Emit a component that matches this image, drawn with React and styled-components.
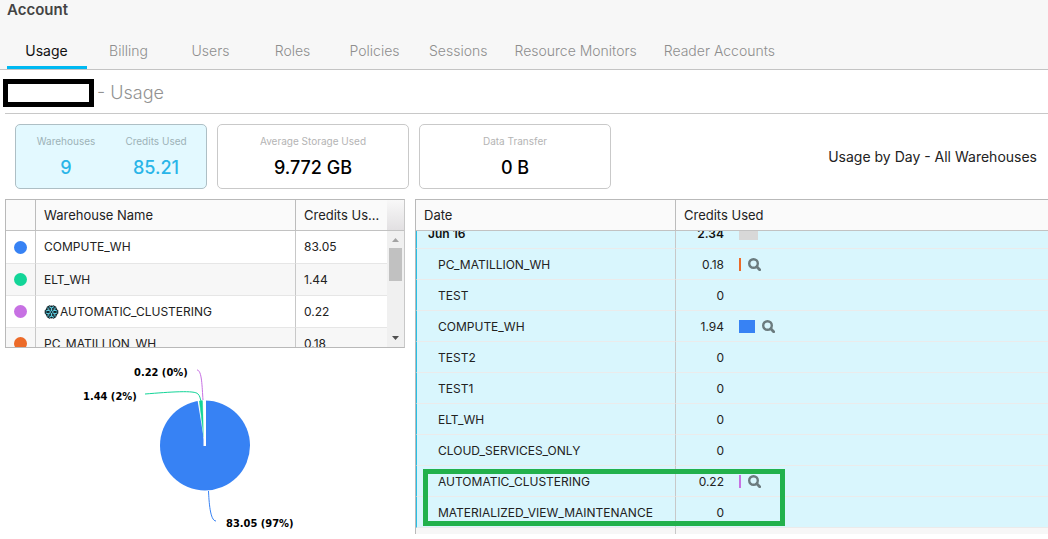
import React, { useLayoutEffect, useRef } from "react";
import styled, { createGlobalStyle } from "styled-components";

const GlobalStyle = createGlobalStyle`
  *, *::before, *::after { box-sizing: border-box; }
  body {
    margin: 0;
    background: #fff;
    color: #222;
    font-family: Inter, "Liberation Sans", sans-serif;
    font-size: 12px;
    line-height: 16px;
  }
`;

const Page = styled.div`
  overflow: hidden;
`;

const Header = styled.header`
  display: flex;
  flex-direction: column;
  gap: 15px;
  background: #f7f7f7;
  border-bottom: 1px solid #c4c4c4;
`;

const AccountTitle = styled.h1`
  margin: 0;
  padding: 0 7px;
  font-size: 15px;
  font-weight: 600;
  line-height: 20px;
  color: #444;
`;

const Tabs = styled.nav`
  display: flex;
  gap: 2px;
  padding: 0 7px;
`;

const Tab = styled.a`
  display: flex;
  justify-content: center;
  align-items: center;
  min-width: 80px;
  height: 34px;
  padding: 0 13px 0 12px;
  border-bottom: 3px solid ${(p) => (p.$active ? "#00b9f2" : "transparent")};
  color: ${(p) => (p.$active ? "#111" : "#8e8e8e")};
  font-size: 14px;
  font-weight: ${(p) => (p.$active ? 400 : 300)};
  text-decoration: none;
  white-space: nowrap;
`;

const SectionTitle = styled.h2`
  display: flex;
  align-items: center;
  gap: 3px;
  height: 44px;
  margin: 0 0 0 5px;
  padding-top: 3px;
  border-bottom: 1px solid #c8c8c8;
  color: #929292;
  font-size: 18px;
  font-weight: 300;
`;

const RedactedName = styled.span`
  width: 91px;
  height: 28px;
  margin-left: -2px;
  border: 5px solid #000;
  background: #fff;
`;

const Summary = styled.section`
  display: flex;
  align-items: center;
  justify-content: space-between;
  padding: 10px 11px 10px 15px;
`;

const Cards = styled.div`
  display: flex;
  gap: 10px;
`;

const Card = styled.button`
  display: flex;
  justify-content: center;
  width: 192px;
  height: 65px;
  padding: 8px 5px;
  border: 1px solid ${(p) => (p.$active ? "#aebfc5" : "#c9c9c9")};
  border-radius: 5px;
  background: ${(p) => (p.$active ? "#e3f9ff" : "#fff")};
  color: ${(p) => (p.$active ? "#29b5e8" : "#000")};
  font: inherit;
`;

const Metric = styled.span`
  display: flex;
  flex: 1;
  flex-direction: column;
  gap: 9px;
`;

const MetricLabel = styled.span`
  color: ${(p) => (p.$active ? "#9db2b7" : "#b4b4b4")};
  font-size: 10px;
  white-space: nowrap;
`;

const MetricValue = styled.span`
  font-size: 18px;
  font-weight: 500;
  line-height: 20px;
`;

const ChartTitle = styled.h3`
  margin: 0;
  color: #222;
  font-size: 14px;
  font-weight: 400;
`;

const Panels = styled.main`
  display: grid;
  grid-template-columns: 400px minmax(0, 1fr);
  gap: 10px;
  padding-left: 5px;
`;

const WarehousePanel = styled.section`
  display: flex;
  border: 1px solid #b9b9b9;
  border-right-color: #c8c8c8;
`;

const Viewport = styled.div`
  flex: 1;
  height: ${(p) => p.$height}px;
  overflow: hidden;
`;

const Grid = styled.table`
  width: 100%;
  border-spacing: 0;
  table-layout: fixed;
`;

const Heading = styled.th`
  position: sticky;
  top: 0;
  width: ${(p) => p.$width || "auto"};
  height: 31px;
  padding: 0 4px 0 8px;
  overflow: hidden;
  border-right: ${(p) => (p.$last ? "0" : "1px")} solid #bcbcbc;
  border-bottom: 1px solid #c2c2c2;
  background: #fafafa;
  color: #222;
  font-size: 13px;
  font-weight: 400;
  text-align: left;
  text-overflow: ellipsis;
  white-space: nowrap;
`;

const Cell = styled.td`
  height: 32px;
  padding: 0 8px;
  border-right: ${(p) => (p.$last ? "0" : "1px")} solid #c8c8c8;
  border-bottom: 1px solid #e6e6e6;
  white-space: nowrap;
`;

const WarehouseRow = styled.tr`
  background: ${(p) => (p.$shaded ? "#f7f7f7" : "#fff")};

  &:first-child td {
    height: 33px;
  }
`;

const WarehouseName = styled.span`
  display: flex;
  align-items: center;
  gap: 1px;
`;

const Dot = styled.span`
  display: block;
  width: 13px;
  height: 13px;
  border-radius: 50%;
  background: ${(p) => p.$color};
`;

const ScrollTrack = styled.div`
  display: flex;
  flex-direction: column;
  align-items: center;
  width: 17px;
  background: #f0f0f0;
`;

const ScrollCorner = styled.div`
  width: 100%;
  height: 31px;
  border-bottom: 1px solid #c2c2c2;
  background: linear-gradient(#f8f8f8, #e2e0e2);
`;

const ScrollThumb = styled.div`
  width: 13px;
  height: 33px;
  margin-bottom: auto;
  background: #c1c1c1;
`;

const ScrollArrow = styled.svg`
  width: 17px;
  height: 17px;
  fill: ${(p) => p.$color};
`;

const PieChart = styled.svg`
  display: block;
  width: 400px;
  height: 186px;
  font-family: "DejaVu Sans Condensed", "DejaVu Sans", sans-serif;
  font-size: 11px;
  font-weight: 700;
`;

const UsagePanel = styled.section`
  display: flex;
  align-self: start;
  border-top: 1px solid #b9b9b9;
  border-left: 1px solid #b9b9b9;
`;

const UsageRow = styled.tr`
  background: ${(p) => (p.$plain ? "#f7f7f7" : "#d9f6fd")};
  font-weight: ${(p) => (p.$total ? 600 : 400)};
  color: ${(p) => (p.$total ? "#111" : "#222")};
`;

const DateCell = styled.td`
  height: 31px;
  padding: 2px 8px 0 ${(p) => (p.$total ? 11 : 21)}px;
  border-left: 1px solid ${(p) => (p.$plain ? "#f7f7f7" : "#29bfe5")};
  border-right: 1px solid #c8c8c8;
  border-bottom: 1px solid #ebebeb;
  white-space: nowrap;
`;

const CreditsCell = styled.td`
  height: 31px;
  padding: 0;
  border-bottom: 1px solid #ebebeb;
`;

const Credits = styled.div`
  display: flex;
  align-items: center;
`;

const CreditValue = styled.span`
  width: 48px;
  margin-right: 15px;
  padding-top: 2px;
  text-align: right;
`;

const Bar = styled.span`
  height: 13px;
  background: ${(p) => p.$color};
`;

const DetailButton = styled.button`
  display: flex;
  margin-left: 7px;
  padding: 0;
  border: 0;
  background: none;
  color: #6b7b7e;
`;

const Highlight = styled.div`
  position: absolute;
  top: 270px;
  left: 8px;
  width: 362px;
  height: 57px;
  border: 5px solid #22b14c;
  pointer-events: none;
`;

const UsageArea = styled.div`
  position: relative;
`;

const tabs = ["Usage", "Billing", "Users", "Roles", "Policies", "Sessions", "Resource Monitors", "Reader Accounts"];

const warehouses = [
  { name: "COMPUTE_WH", credits: "83.05", color: "#3782f4" },
  { name: "ELT_WH", credits: "1.44", color: "#13d598" },
  { name: "AUTOMATIC_CLUSTERING", credits: "0.22", color: "#c771e3", service: true },
  { name: "PC_MATILLION_WH", credits: "0.18", color: "#ec6a28" },
];

const usage = [
  { name: "Jun 16", credits: "2.34", bar: 19, color: "#d8d8d8", total: true },
  { name: "PC_MATILLION_WH", credits: "0.18", bar: 2, color: "#ec6a28" },
  { name: "TEST", credits: "0" },
  { name: "COMPUTE_WH", credits: "1.94", bar: 16, color: "#3782f4" },
  { name: "TEST2", credits: "0" },
  { name: "TEST1", credits: "0" },
  { name: "ELT_WH", credits: "0" },
  { name: "CLOUD_SERVICES_ONLY", credits: "0" },
  { name: "AUTOMATIC_CLUSTERING", credits: "0.22", bar: 2, color: "#c771e3" },
  { name: "MATERIALIZED_VIEW_MAINTENANCE", credits: "0" },
];

function ServiceIcon() {
  const arms = [0, 60, 120, 180, 240, 300];
  return (
    <svg width="15" height="14" viewBox="0 0 15 14" aria-hidden="true">
      <g transform="translate(7.5 7)" fill="none" strokeLinecap="round" strokeLinejoin="round">
        {arms.map((a) => (
          <path key={a} transform={`rotate(${a})`} d="M0 -1V-5M-2 -5.200L0 -3.600L2 -5.200" stroke="#0b1a20" strokeWidth="2.800" />
        ))}
        {arms.map((a) => (
          <path key={a} transform={`rotate(${a})`} d="M0 -1.300V-3M-1.900 -5.200L0 -3.700L1.900 -5.200" stroke="#62cfe2" strokeWidth="1.100" />
        ))}
      </g>
    </svg>
  );
}

function MagnifierIcon() {
  return (
    <svg width="13" height="13" viewBox="0 0 13 13" fill="none" stroke="currentColor" aria-hidden="true">
      <circle cx="5.500" cy="5.500" r="4.300" strokeWidth="2.400" />
      <path d="M8.800 8.800L11.700 11.700" strokeWidth="2.800" strokeLinecap="round" />
    </svg>
  );
}

function WarehouseTable() {
  return (
    <WarehousePanel>
      <Viewport $height={147}>
        <Grid>
          <thead>
            <tr>
              <Heading $width="30px" aria-label="Color" />
              <Heading $width="260px">Warehouse Name</Heading>
              <Heading $last>Credits Used</Heading>
            </tr>
          </thead>
          <tbody>
            {warehouses.map((w, i) => (
              <WarehouseRow key={w.name} $shaded={i % 2 === 1}>
                <Cell><Dot $color={w.color} /></Cell>
                <Cell>
                  <WarehouseName>
                    {w.service && <ServiceIcon />}
                    {w.name}
                  </WarehouseName>
                </Cell>
                <Cell $last>{w.credits}</Cell>
              </WarehouseRow>
            ))}
          </tbody>
        </Grid>
      </Viewport>
      <ScrollTrack aria-hidden="true">
        <ScrollCorner />
        <ScrollArrow $color="#a3a3a3" viewBox="0 0 17 17"><path d="M5 11h7L8.500 7z" /></ScrollArrow>
        <ScrollThumb />
        <ScrollArrow $color="#505050" viewBox="0 0 17 17"><path d="M5 6h7L8.500 10z" /></ScrollArrow>
      </ScrollTrack>
    </WarehousePanel>
  );
}

function CreditsPie() {
  return (
    <PieChart viewBox="0 0 400 186" role="img" aria-label="Credits used by warehouse">
      <circle cx="200" cy="97.500" r="45" fill="#3782f4" />
      <path d="M200 98L192.500 52H201V98z" fill="#fff" />
      <path d="M198.900 89L194.400 53L197.400 52.700z" fill="#13d598" stroke="#13d598" strokeWidth="0.500" />
      <path d="M199.500 98V52" stroke="#fff" strokeWidth="2" />
      <g fill="none" strokeWidth="1">
        <path d="M192 22C197 22 197 39 198 52" stroke="#c771e3" />
        <path d="M140 46C165 44 190 42 193 46C195 48 195 50 196 53" stroke="#13d598" />
        <path d="M203.500 143C204 153 205 173 211 173" stroke="#3782f4" />
      </g>
      <g fill="#000">
        <text x="129" y="28">0.22 (0%)</text>
        <text x="78" y="52">1.44 (2%)</text>
        <text x="221" y="179">83.05 (97%)</text>
      </g>
    </PieChart>
  );
}

function UsageTable() {
  const viewport = useRef(null);

  useLayoutEffect(() => {
    viewport.current.scrollTop = 13;
  }, []);

  return (
    <UsageArea>
      <UsagePanel>
        <Viewport $height={334} ref={viewport}>
          <Grid>
            <thead>
              <tr>
                <Heading $width="260px">Date</Heading>
                <Heading $last>Credits Used</Heading>
              </tr>
            </thead>
            <tbody>
              {usage.map((u) => (
                <UsageRow key={u.name} $total={u.total}>
                  <DateCell $total={u.total}>{u.name}</DateCell>
                  <CreditsCell>
                    <Credits>
                      <CreditValue>{u.credits}</CreditValue>
                      {u.bar && <Bar $color={u.color} style={{ width: u.bar }} />}
                      {u.bar && !u.total && (
                        <DetailButton aria-label={`Inspect ${u.name}`}><MagnifierIcon /></DetailButton>
                      )}
                    </Credits>
                  </CreditsCell>
                </UsageRow>
              ))}
              <UsageRow $plain>
                <DateCell $plain />
                <CreditsCell />
              </UsageRow>
            </tbody>
          </Grid>
        </Viewport>
      </UsagePanel>
      <Highlight />
    </UsageArea>
  );
}

export default function App() {
  return (
    <Page>
      <GlobalStyle />
      <Header>
        <AccountTitle>Account</AccountTitle>
        <Tabs>
          {tabs.map((t, i) => (
            <Tab key={t} href="#" $active={i === 0}>{t}</Tab>
          ))}
        </Tabs>
      </Header>
      <SectionTitle><RedactedName />- Usage</SectionTitle>
      <Summary>
        <Cards>
          <Card $active>
            <Metric>
              <MetricLabel $active>Warehouses</MetricLabel>
              <MetricValue>9</MetricValue>
            </Metric>
            <Metric>
              <MetricLabel $active>Credits Used</MetricLabel>
              <MetricValue>85.21</MetricValue>
            </Metric>
          </Card>
          <Card>
            <Metric>
              <MetricLabel>Average Storage Used</MetricLabel>
              <MetricValue>9.772 GB</MetricValue>
            </Metric>
          </Card>
          <Card>
            <Metric>
              <MetricLabel>Data Transfer</MetricLabel>
              <MetricValue>0 B</MetricValue>
            </Metric>
          </Card>
        </Cards>
        <ChartTitle>Usage by Day - All Warehouses</ChartTitle>
      </Summary>
      <Panels>
        <div>
          <WarehouseTable />
          <CreditsPie />
        </div>
        <UsageTable />
      </Panels>
    </Page>
  );
}
